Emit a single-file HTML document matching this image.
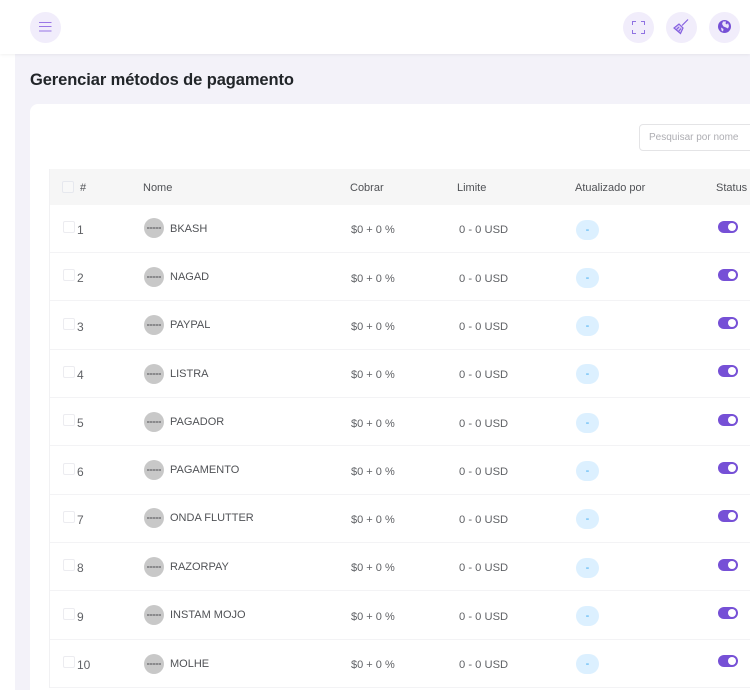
<!DOCTYPE html>
<html><head><meta charset="utf-8">
<style>
*{box-sizing:border-box}
html,body{margin:0;padding:0;width:750px;height:690px;overflow:hidden;background:#fff;font-family:"Liberation Sans",sans-serif}
#w{position:absolute;left:0;top:0;width:750px;height:690px;overflow:hidden;filter:blur(.35px)}
.a{position:absolute;white-space:nowrap}
#bg{left:15px;top:54px;width:735px;height:636px;background:#f3f2f9}
#top{left:0;top:0;width:750px;height:54px;background:#fff;box-shadow:0 1px 3px rgba(0,0,0,.06)}
.c{width:31px;height:31px;border-radius:50%;background:#f1edfb;top:11.5px}
#card{left:30px;top:104px;width:730px;height:600px;background:#fff;border-radius:8px}
h1{margin:0;left:30px;top:69px;font-size:16.5px;line-height:22px;font-weight:bold;color:#212529;letter-spacing:-.1px}
#search{left:639px;top:124px;width:130px;height:27px;border:1px solid #e4e4e6;border-radius:4px;background:#fff;font-size:10px;color:#aeaeb3;line-height:25px;padding-left:9px}
#th{left:50px;top:169px;width:700px;height:36px;background:#f6f6f6}
#lb{left:49px;top:169px;width:1px;height:519px;background:#f1f1f3}
.h{font-size:11px;line-height:14px;color:#505256;top:180.5px}
.l{left:50px;width:700px;height:1px;background:#f3f3f5}
.cb{width:12px;height:12px;border:1px solid #ececf0;border-radius:2px;background:#fff;left:63px;margin-top:.5px}
.n{font-size:12px;line-height:14px;color:#606266;left:77px}
.av{left:144px;width:20px;height:20px;border-radius:50%;background:#c8c8c8}
.av:after{content:"";position:absolute;left:3px;top:9px;width:14px;height:2px;background:repeating-linear-gradient(90deg,#8a8a8c 0 2px,#a6a6a8 2px 3px)}
.t{font-size:11px;line-height:14px;color:#505256;left:170px}
.f{font-size:11px;line-height:14px;color:#606266;left:351px}
.u{font-size:11.200px;line-height:14px;color:#606266;left:459px}
.p{left:576px;width:23px;height:20px;border-radius:10px;background:#dcf0ff;color:#3aa8f0;font-size:11px;line-height:21px;text-align:center}
.s{left:718px;width:20px;height:12px;border-radius:6px;background:#7650d6}
.s:after{content:"";position:absolute;right:2px;top:2px;width:8px;height:8px;border-radius:50%;background:#fff}
</style></head><body><div id="w">
<div class="a" id="bg"></div>
<div class="a" id="top"></div>
<div class="a c" style="left:30px"></div>
<svg class="a" style="left:39px;top:21px" width="13" height="12"><path d="M0 1.500h12.500M0 5.500h12.500" stroke="#9a78e6" stroke-width="1"/><path d="M0 10h12.500" stroke="#b9a2ee" stroke-width="1.600"/></svg>
<div class="a c" style="left:623px"></div>
<div class="a c" style="left:666px"></div>
<div class="a c" style="left:709px"></div>
<svg class="a" style="left:632px;top:21px" width="13" height="13" fill="none" stroke="#8f72e2" stroke-width="1"><path d="M.5 4V.5H4M9 .5h3.500V4M.5 9v3.500H4M9 12.500h3.500V9"/></svg>
<svg class="a" style="left:673px;top:18px" width="16" height="17" fill="none" stroke="#8560e0" stroke-width="1.200"><path d="M15 1.500 9 7.500"/><path d="M6 6 10 10 7.500 15.500 1 10Z" fill="#d9ccf6"/><path d="M3.500 11.500 6 9M5.500 13.500 8 10.500"/></svg>
<svg class="a" style="left:717px;top:19px" width="15" height="15" viewBox="0 0 15 15"><circle cx="7.500" cy="7.500" r="6.500" fill="#7650d6"/><path d="M6 2.500 9 2.500 8.500 4.500 10 5.500 11 4 12 7 11 9.500 9 8.500 6.500 7.500 5 5ZM4 8.500 6.500 10 6 12.500 4.500 11.500Z" fill="#eae4fa"/></svg>
<h1 class="a">Gerenciar métodos de pagamento</h1>
<div class="a" id="card"></div>
<div class="a" id="search">Pesquisar por nome</div>
<div class="a" id="th"></div>
<div class="a" id="lb"></div>
<div class="a cb" style="left:62px;top:180.500px;border-color:#e6e8ee;background:#f8f8f8"></div>
<div class="a h" style="left:80px">#</div>
<div class="a h" style="left:143px">Nome</div>
<div class="a h" style="left:350px">Cobrar</div>
<div class="a h" style="left:457px">Limite</div>
<div class="a h" style="left:575px">Atualizado por</div>
<div class="a h" style="left:716px">Status</div>

<div class="a l" style="top:252px"></div>
<div class="a cb" style="top:220px"></div><div class="a n" style="top:223px">1</div><div class="a av" style="top:218px"></div><div class="a t" style="top:221.500px">BKASH</div><div class="a f" style="top:223px">$0 + 0 %</div><div class="a u" style="top:223px">0 - 0 USD</div><div class="a p" style="top:219.500px">-</div><div class="a s" style="top:221px"></div>

<div class="a l" style="top:300px"></div>
<div class="a cb" style="top:268px"></div><div class="a n" style="top:271px">2</div><div class="a av" style="top:267px"></div><div class="a t" style="top:270px">NAGAD</div><div class="a f" style="top:271.500px">$0 + 0 %</div><div class="a u" style="top:271.500px">0 - 0 USD</div><div class="a p" style="top:267.500px">-</div><div class="a s" style="top:269px"></div>

<div class="a l" style="top:349px"></div>
<div class="a cb" style="top:317px"></div><div class="a n" style="top:320px">3</div><div class="a av" style="top:315px"></div><div class="a t" style="top:318px">PAYPAL</div><div class="a f" style="top:320px">$0 + 0 %</div><div class="a u" style="top:320px">0 - 0 USD</div><div class="a p" style="top:315.500px">-</div><div class="a s" style="top:317px"></div>

<div class="a l" style="top:397px"></div>
<div class="a cb" style="top:365px"></div><div class="a n" style="top:368px">4</div><div class="a av" style="top:364px"></div><div class="a t" style="top:366.500px">LISTRA</div><div class="a f" style="top:368px">$0 + 0 %</div><div class="a u" style="top:368px">0 - 0 USD</div><div class="a p" style="top:364px">-</div><div class="a s" style="top:365px"></div>

<div class="a l" style="top:445px"></div>
<div class="a cb" style="top:413px"></div><div class="a n" style="top:416px">5</div><div class="a av" style="top:412px"></div><div class="a t" style="top:415px">PAGADOR</div><div class="a f" style="top:416.500px">$0 + 0 %</div><div class="a u" style="top:416.500px">0 - 0 USD</div><div class="a p" style="top:412.500px">-</div><div class="a s" style="top:414px"></div>

<div class="a l" style="top:494px"></div>
<div class="a cb" style="top:462px"></div><div class="a n" style="top:465px">6</div><div class="a av" style="top:460px"></div><div class="a t" style="top:463px">PAGAMENTO</div><div class="a f" style="top:465px">$0 + 0 %</div><div class="a u" style="top:465px">0 - 0 USD</div><div class="a p" style="top:460.500px">-</div><div class="a s" style="top:462px"></div>

<div class="a l" style="top:542px"></div>
<div class="a cb" style="top:510px"></div><div class="a n" style="top:513px">7</div><div class="a av" style="top:508px"></div><div class="a t" style="top:511px">ONDA FLUTTER</div><div class="a f" style="top:513px">$0 + 0 %</div><div class="a u" style="top:513px">0 - 0 USD</div><div class="a p" style="top:509px">-</div><div class="a s" style="top:510px"></div>

<div class="a l" style="top:590px"></div>
<div class="a cb" style="top:558px"></div><div class="a n" style="top:561px">8</div><div class="a av" style="top:557px"></div><div class="a t" style="top:559.500px">RAZORPAY</div><div class="a f" style="top:561px">$0 + 0 %</div><div class="a u" style="top:561px">0 - 0 USD</div><div class="a p" style="top:557.500px">-</div><div class="a s" style="top:559px"></div>

<div class="a l" style="top:639px"></div>
<div class="a cb" style="top:607px"></div><div class="a n" style="top:610px">9</div><div class="a av" style="top:605px"></div><div class="a t" style="top:608px">INSTAM MOJO</div><div class="a f" style="top:610px">$0 + 0 %</div><div class="a u" style="top:610px">0 - 0 USD</div><div class="a p" style="top:606px">-</div><div class="a s" style="top:607px"></div>

<div class="a l" style="top:687px"></div>
<div class="a cb" style="top:655px"></div><div class="a n" style="top:658px">10</div><div class="a av" style="top:654px"></div><div class="a t" style="top:656.500px">MOLHE</div><div class="a f" style="top:658px">$0 + 0 %</div><div class="a u" style="top:658px">0 - 0 USD</div><div class="a p" style="top:654px">-</div><div class="a s" style="top:655px"></div>
</div></body></html>
